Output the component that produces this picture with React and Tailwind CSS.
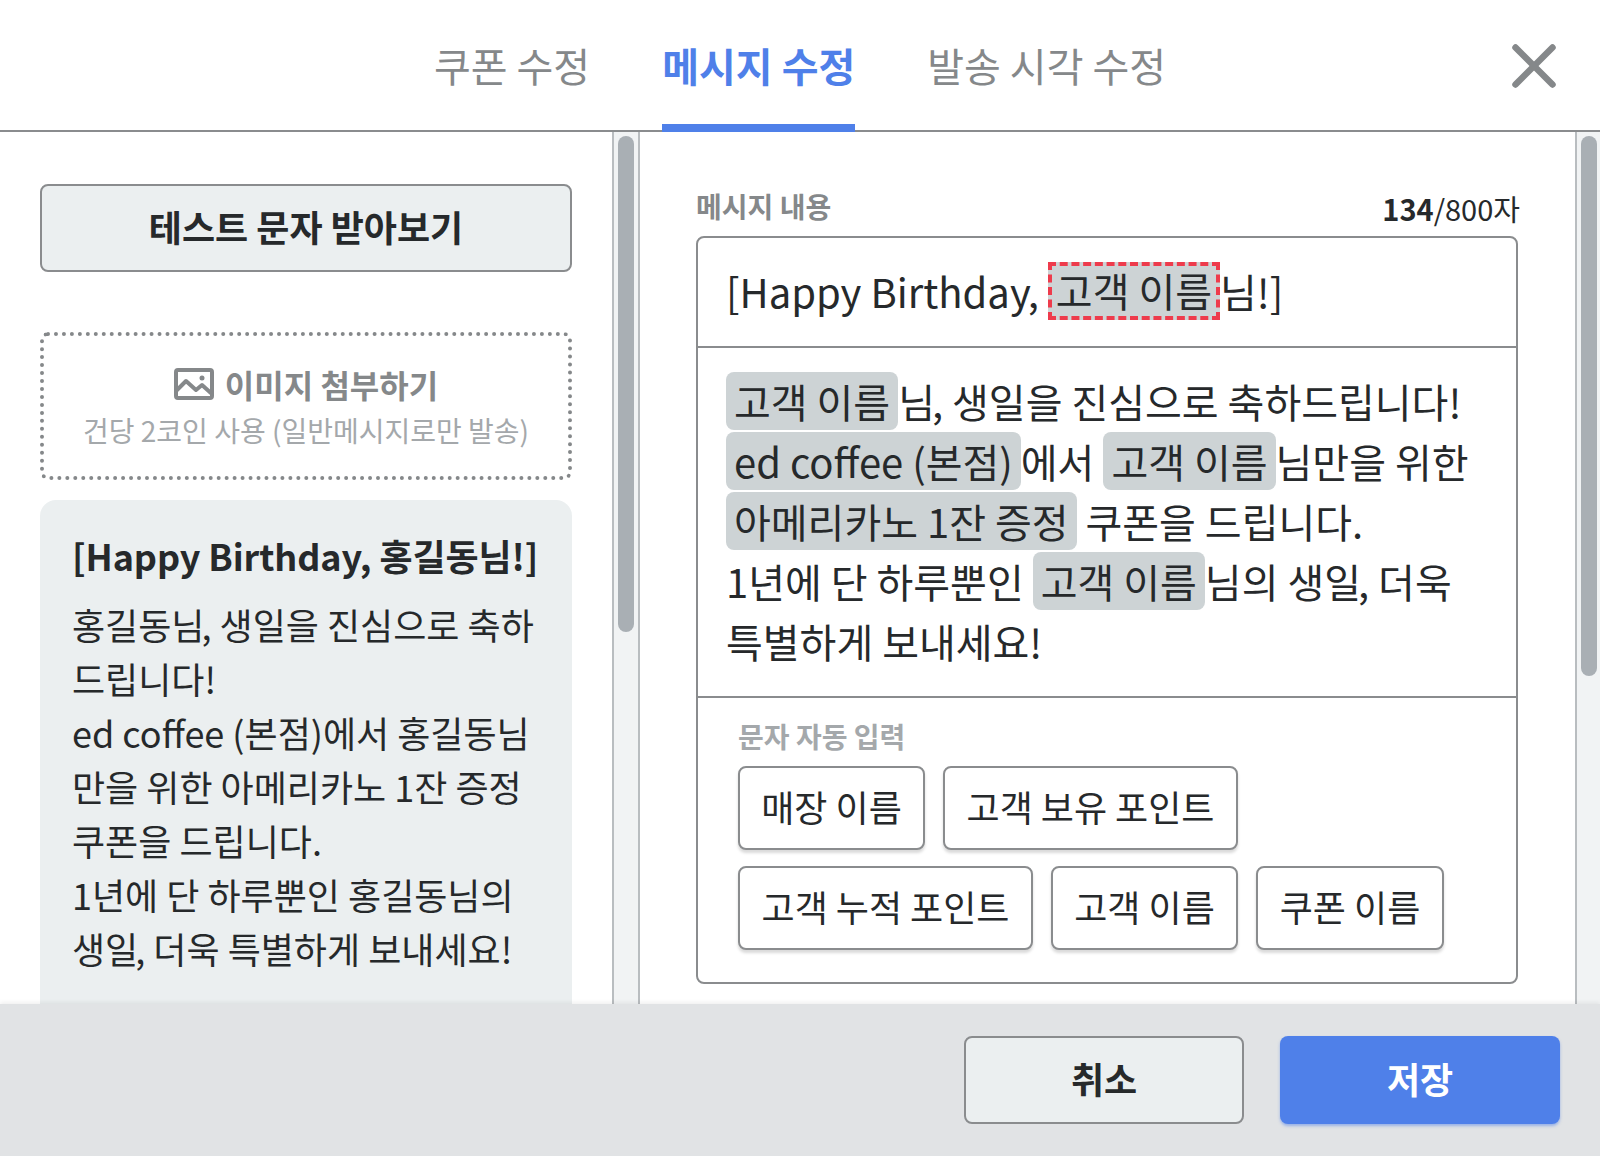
import { X } from "lucide-react";

const font = { fontFamily: '"Noto Sans CJK KR", "Noto Sans", sans-serif' };

function Chip({ children, className = "" }) {
  return <span className={`inline-block h-[58px] rounded-lg bg-[#cdd3d5] px-2 leading-[58px] ${className}`}>{children}</span>;
}

// the comma sits tighter in the reference than in this font
function Comma() {
  return <span className="-ml-[3px]">,</span>;
}

function TagButton({ children, className = "" }) {
  return (
    <button className={`h-[84px] rounded-lg border-2 border-[#8a8c8e] bg-white pb-1 text-[36px] leading-none text-[#26292b] shadow-[0_3px_3px_rgba(0,0,0,0.15)] ${className}`}>
      {children}
    </button>
  );
}

function ImageIcon() {
  return (
    <svg width="40" height="32" viewBox="0 0 40 32" fill="none" stroke="#85888a" strokeWidth="4" strokeLinejoin="round">
      <rect x="2" y="2" width="36" height="28" rx="2" />
      <path d="M2 23 L12 13 L22 22 L28 17 L38 26" />
      <circle cx="28" cy="10" r="2.5" fill="#85888a" stroke="none" />
    </svg>
  );
}

function Scrollbar({ thumb, className = "" }) {
  return (
    <div className={`shrink-0 border-x-2 border-[#b9bdc0] bg-[#f1f3f4] pt-1 ${className}`}>
      <div className={`mx-auto w-4 rounded-lg bg-[#a9afb4] ${thumb}`} />
    </div>
  );
}

export default function App() {
  return (
    <div style={font} className="flex h-[1156px] w-[1600px] flex-col overflow-hidden bg-white text-[#26292b]">
      {/* tabs */}
      <header className="grid h-[132px] shrink-0 grid-cols-[1fr_auto_1fr] border-b-2 border-[#8a8c8e]">
        <div />
        <nav className="flex gap-[72px] text-[40px] text-[#85888a]">
          <div className="h-[132px] pt-[35px] leading-[60px]">쿠폰 수정</div>
          <div className="h-[132px] border-b-8 border-[#4f80e9] pt-[35px] font-bold leading-[60px] text-[#4f80e9]">메시지 수정</div>
          <div className="h-[132px] pt-[35px] leading-[60px]">발송 시각 수정</div>
        </nav>
        <div className="flex justify-end pr-[29px] pt-[29px]">
          <X size={74} strokeWidth={2.1} color="#85888a" />
        </div>
      </header>

      <div className="flex min-h-0 flex-1">
        {/* left pane */}
        <div className="w-[612px] shrink-0 overflow-hidden px-10 pt-[52px]">
          <button className="h-[88px] w-full rounded-lg border-2 border-[#8a8c8e] bg-[#ebeff0] pb-1 text-[36px] font-bold leading-none text-[#26292b]">
            테스트 문자 받아보기
          </button>
          <div className="mt-[60px] flex h-[148px] flex-col items-center justify-center rounded-lg border-4 border-dotted border-[#85888a]">
            <div className="flex items-center gap-[11px] pt-[1px] text-[32px] font-bold leading-[46px] text-[#85888a]">
              <ImageIcon />
              이미지 첨부하기
            </div>
            <div className="pt-[1px] text-[28px] leading-[44px] text-[#a4a8ab]">건당 2코인 사용 (일반메시지로만 발송)</div>
          </div>
          <div className="mt-5 rounded-2xl bg-[#ebeff0] px-8 pb-20 pt-[26px]">
            <div className="whitespace-nowrap text-[36px] font-bold leading-[58px] tracking-[-0.1px]">[Happy Birthday, 홍길동님!]</div>
            <div className="mt-[13px] whitespace-nowrap text-[36px] leading-[54px]">
              <div>홍길동님<Comma /> 생일을 진심으로 축하</div>
              <div>드립니다!</div>
              <div>ed coffee (본점)에서 홍길동님</div>
              <div>만을 위한 아메리카노 1잔 증정</div>
              <div>쿠폰을 드립니다.</div>
              <div>1년에 단 하루뿐인 홍길동님의</div>
              <div>생일<Comma /> 더욱 특별하게 보내세요!</div>
            </div>
          </div>
        </div>
        <Scrollbar className="w-[28px]" thumb="h-[496px]" />

        {/* right pane */}
        <div className="min-w-0 flex-1 overflow-hidden pl-[56px] pr-[57px] pt-[52px]">
          <div className="flex h-[52px] items-start justify-between">
            <div className="text-[28px] font-bold leading-[44px] text-[#85888a]">메시지 내용</div>
            <div className="-mr-[2px] pt-[2px] text-[29px] leading-[44px]">
              <span className="font-bold">134</span>/800자
            </div>
          </div>
          <div className="rounded-lg border-2 border-[#8a8c8e]">
            <div className="flex h-[110px] items-center border-b-2 border-[#8a8c8e] pb-[2px] pl-[28px] text-[40px] leading-none">
              <span>[Happy Birthday<Comma />&nbsp;</span>
              <span className="inline-block h-[58px] border-4 border-dashed border-[#ee3b4c] bg-[#cdd3d5] px-1 leading-[48px]">고객 이름</span>
              <span>님!]</span>
            </div>
            <div className="h-[350px] border-b-2 border-[#8a8c8e] pl-[28px] pr-6 pt-[23px] text-[40px] leading-[60px]">
              <div><Chip>고객 이름</Chip>님<Comma /> 생일을 진심으로 축하드립니다!</div>
              <div><Chip>ed coffee (본점)</Chip>에서 <Chip>고객 이름</Chip>님만을 위한</div>
              <div><Chip>아메리카노 1잔 증정</Chip> 쿠폰을 드립니다.</div>
              <div>1년에 단 하루뿐인 <Chip>고객 이름</Chip>님의 생일<Comma /> 더욱</div>
              <div>특별하게 보내세요!</div>
            </div>
            <div className="px-10 pb-8 pt-[16px]">
              <div className="text-[28px] font-bold leading-[44px] text-[#a4a8ab]">문자 자동 입력</div>
              <div className="mt-[8px] flex gap-[18px]">
                <TagButton className="w-[187px]">매장 이름</TagButton>
                <TagButton className="w-[295px]">고객 보유 포인트</TagButton>
              </div>
              <div className="mt-[16px] flex gap-[18px]">
                <TagButton className="w-[295px]">고객 누적 포인트</TagButton>
                <TagButton className="w-[187px]">고객 이름</TagButton>
                <TagButton className="w-[188px]">쿠폰 이름</TagButton>
              </div>
            </div>
          </div>
        </div>
        <Scrollbar className="w-[25px] border-r-0" thumb="h-[540px]" />
      </div>

      {/* footer */}
      <footer className="flex h-[152px] shrink-0 justify-end gap-9 bg-[#e1e3e5] pr-10 pt-[32px] shadow-[0_-2px_4px_rgba(0,0,0,0.06)]">
        <button className="h-[88px] w-[280px] rounded-lg border-2 border-[#8a8c8e] bg-[#ebeff0] pb-1 text-[36px] font-bold leading-none text-[#26292b]">취소</button>
        <button className="h-[88px] w-[280px] rounded-lg bg-[#4f80e9] pb-1 text-[36px] font-bold leading-none text-white shadow-[0_2px_3px_rgba(79,128,233,0.5)]">저장</button>
      </footer>
    </div>
  );
}
